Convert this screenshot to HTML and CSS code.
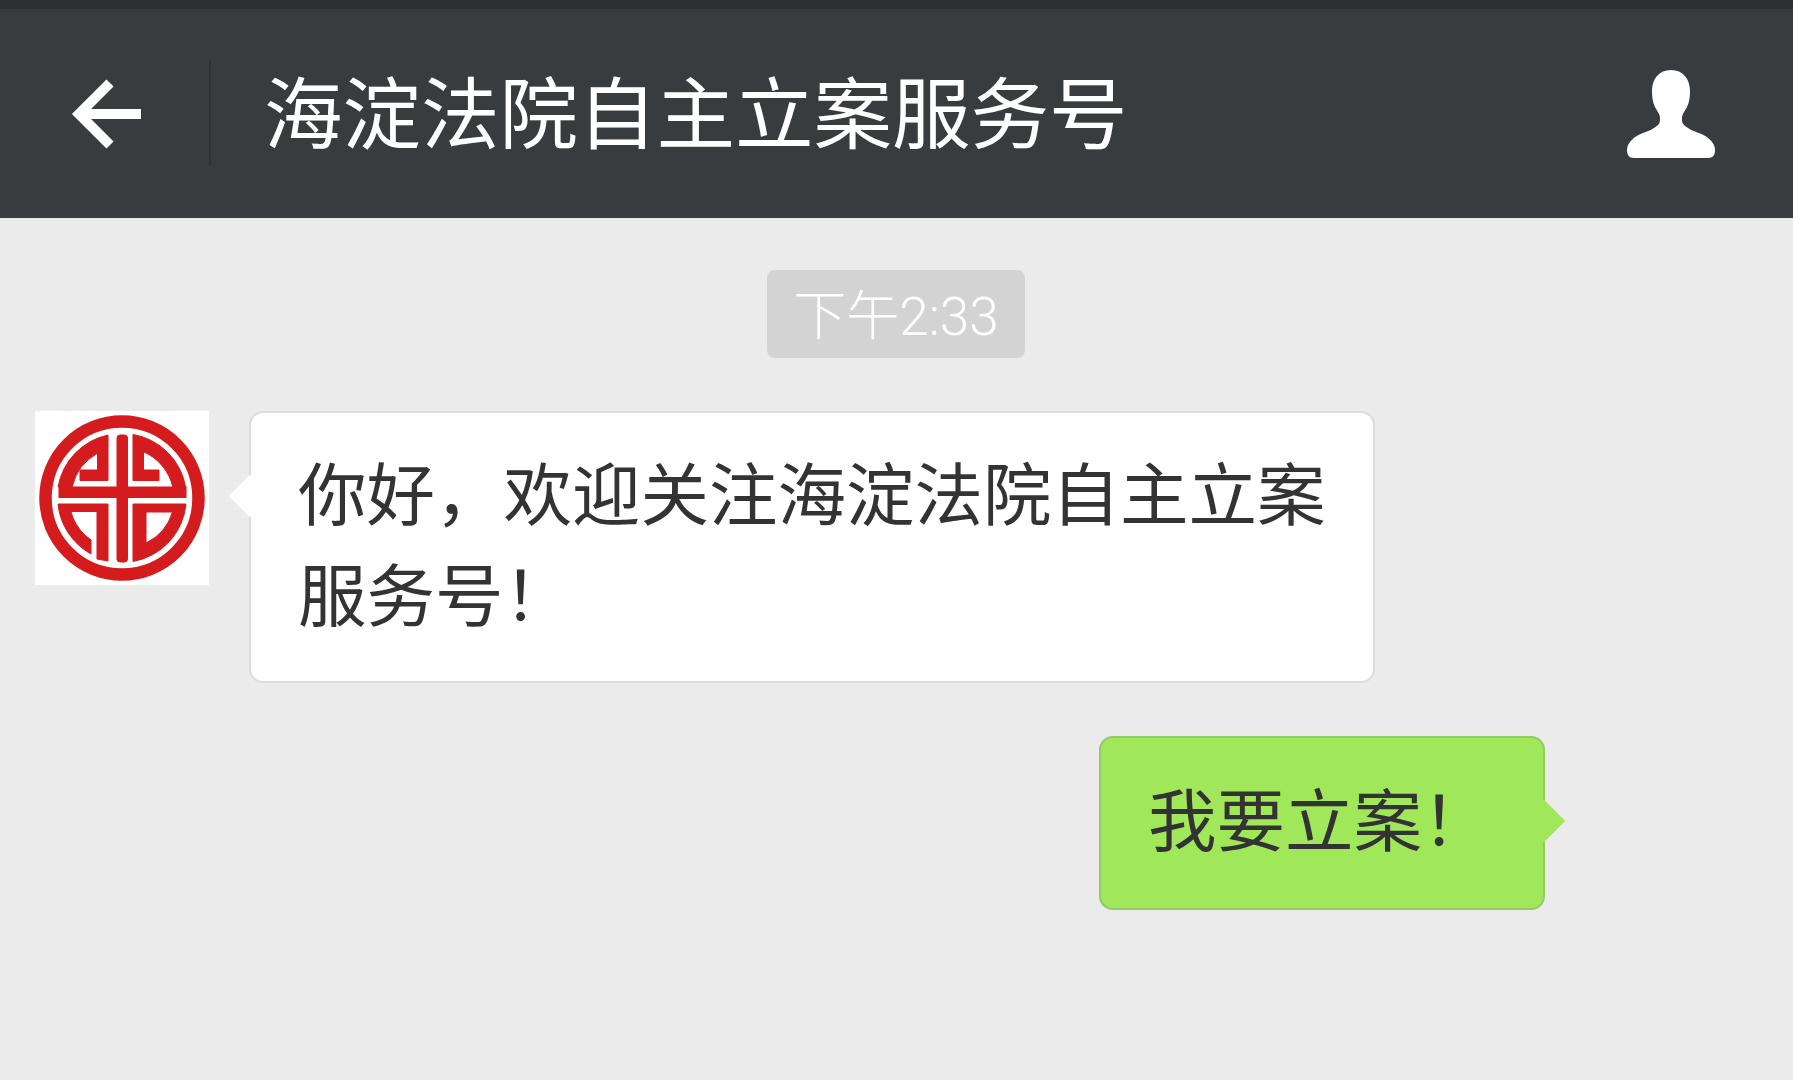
FILE: index.html
```html
<!DOCTYPE html>
<html lang="zh-CN">
<head>
    <meta charset="UTF-8">
    <meta name="viewport" content="width=device-width, initial-scale=1.0">
    <title>海淀法院自主立案服务号</title>
    <link rel="stylesheet" href="styles.css">
</head>
<body>
    <div class="status-strip"></div>
    <header class="top-bar">
        <svg class="back-icon" viewBox="0 0 70 70">
            <path d="M70 35H8M39 4L8 35L39 66"/>
        </svg>
        <div class="top-divider"></div>
        <h1 class="top-title">海淀法院自主立案服务号</h1>
        <svg class="person-icon" viewBox="0 0 88 88">
            <path d="M44 0C56 0 63 9 63 21C63 28 62 33 60 37C58 41 55 44 55 48C55 51 55 53 57 55C60 58 66 61 72 63C80 66 88 72 88 80C88 85 86 88 81 88H7C2 88 0 85 0 80C0 72 8 66 16 63C22 61 28 58 31 55C33 53 33 51 33 48C33 44 30 41 28 37C26 33 25 28 25 21C25 9 32 0 44 0Z"/>
        </svg>
    </header>

    <main class="chat">
        <div class="time-pill"><span class="time-text">下午2:33</span></div>

        <div class="msg-row">
            <div class="avatar">
                <svg viewBox="0 0 174 174">
                    <circle class="logo-ring" cx="87" cy="87" r="76.5"/>
                    <g class="logo-mark">
                        <rect x="24" y="76" width="127" height="10.5"/>
                        <rect x="82" y="24" width="10.5" height="127" rx="3"/>
                        <path d="M23 76A64.5 64.5 0 0 1 73 24L73 69.5L45 69.5L45 59L62.5 59L62.5 42.3A51 51 0 0 0 37.2 76Z"/>
                        <path d="M98 23.4A64.5 64.5 0 0 1 150.6 76L137.8 76A51 51 0 0 0 108.5 40.8L108.5 59L124 59L124 69.5L98 69.5Z"/>
                        <path d="M23 93L73 93L73 150L62 148L62 100.5L36 100.5L38 107A52 52 0 0 0 56 129L56 143A64.5 64.5 0 0 1 23 93Z"/>
                        <path fill-rule="evenodd" d="M98 93L151 93A64.5 64.5 0 0 1 98 150.5ZM111 101L137.5 101A51 51 0 0 1 111 132Z"/>
                    </g>
                </svg>
            </div>
            <div class="bubble bubble-in">你好，欢迎关注海淀法院自主立案服务号！</div>
        </div>

        <div class="msg-row msg-row-out">
            <div class="bubble bubble-out">我要立案！</div>
        </div>
    </main>
</body>
</html>
```

FILE: styles.css
```css
body {
    margin: 0;
    background: #ebebeb;
    font-family: "Noto Sans CJK SC", sans-serif;
    color: #333;
}
.status-strip {
    height: 9px;
    background: #2d3033;
}
.top-bar {
    display: flex;
    align-items: center;
    height: 209px;
    background: #393c3f;
    color: #fff;
}
.back-icon {
    width: 70px;
    height: 70px;
    margin-left: 71px;
    margin-right: 68px;
    fill: none;
    stroke: #fff;
    stroke-width: 10;
}
.top-divider {
    width: 2px;
    height: 105px;
    margin-right: 53px;
    background: #2f3235;
}
.top-title {
    flex: 1;
    margin: 0 0 10px;
    font-size: 78.5px;
    font-weight: 400;
    line-height: 100px;
}
.person-icon {
    width: 88px;
    height: 88px;
    margin-right: 78px;
    fill: #fff;
}
.chat {
    display: flex;
    flex-direction: column;
    padding-top: 52px;
}
.time-pill {
    align-self: center;
    display: flex;
    justify-content: center;
    align-items: center;
    width: 258px;
    height: 88px;
    margin-right: 1px;
    background: #d3d3d3;
    border-radius: 8px;
    color: #fff;
    font-family: Roboto, "Noto Sans CJK SC", sans-serif;
    font-size: 53px;
    font-weight: 300;
}
.time-text {
    margin-bottom: 4px;
}
.msg-row {
    display: flex;
    align-items: flex-start;
    gap: 40px;
    margin-top: 53px;
    padding-left: 35px;
}
.msg-row-out {
    justify-content: flex-end;
    padding-right: 248px;
}
.avatar {
    width: 174px;
    height: 174px;
    background: #fff;
}
.avatar svg {
    display: block;
    filter: blur(0.5px);
}
.logo-ring {
    fill: none;
    stroke: #d41b1e;
    stroke-width: 12.5;
}
.logo-mark {
    fill: #d41b1e;
    stroke: #d41b1e;
    stroke-width: 1;
}
.bubble {
    position: relative;
    box-sizing: border-box;
    border-radius: 14px;
    font-size: 68.5px;
    line-height: 101px;
}
.bubble::after {
    content: "";
    position: absolute;
    top: 68px;
    width: 30px;
    height: 30px;
    transform: rotate(45deg);
}
.bubble-in {
    width: 1126px;
    padding: 27px 40px 39px 47px;
    background: #fff;
    border: 2px solid #dcdcdc;
}
.bubble-in::after {
    left: -16px;
    background: #fff;
}
.bubble-out {
    width: 446px;
    height: 174px;
    padding: 28px 50px 24px 47px;
    background: #a0e75a;
    border: 2px solid #8fcc63;
}
.bubble-out::after {
    right: -16px;
    background: #a0e75a;
}
```
